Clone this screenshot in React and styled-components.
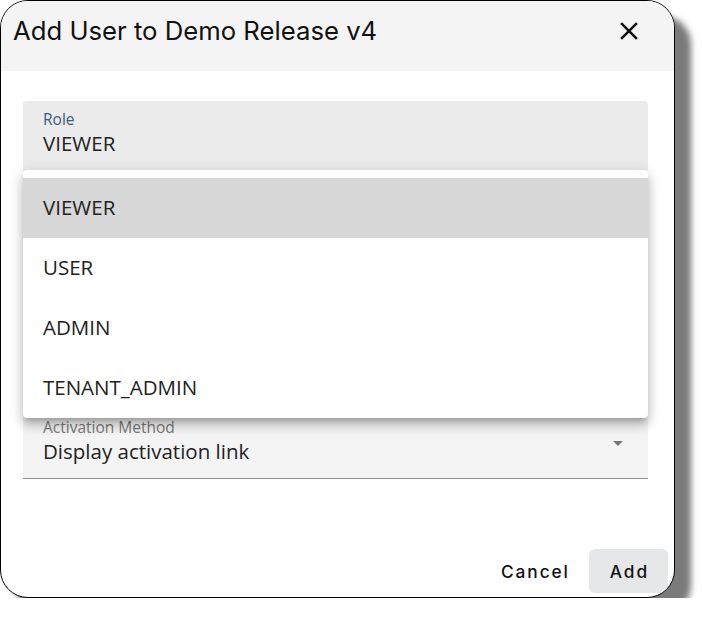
import React from 'react';
import styled, { createGlobalStyle } from 'styled-components';

const GlobalStyle = createGlobalStyle`
    body {
        margin:0;
        background:#fff;
        font-family:"Open Sans", "Liberation Sans", sans-serif;
    }
`

const Dialog = styled.div`
    width:675px;
    height:598px;
    box-sizing:border-box;
    border:1px solid #000;
    border-radius:28px;
    background:#fff;
    box-shadow:16px 16px 6px #7a7a7a;
    overflow:hidden;
    display:flex;
    flex-direction:column;
`
const Header = styled.div`
    height:70px;
    flex-shrink:0;
    background:#f4f4f4;
    display:flex;
    justify-content:space-between;
    align-items:flex-start;
    padding:14px 30px 0 12px;
    box-sizing:border-box;
`
const Title = styled.h2`
    margin:0;
    font-family:Inter, "Liberation Sans", sans-serif;
    font-size:25.7px;
    font-weight:400;
    line-height:31px;
    color:#111;
`
const CloseButton = styled.button`
    border:none;
    background:none;
    padding:0;
    width:30px;
    height:30px;
    margin-top:1px;
    color:#111;
    cursor:pointer;
`
const Body = styled.div`
    padding:30px 26px 0 22px;
    display:flex;
    flex-direction:column;
`
const Field = styled.div`
    position:relative;
    height:70px;
    box-sizing:border-box;
    padding:7px 20px 0 20px;
    border-radius:4px 4px 0 0;
    background:${({focused}) => focused ? '#ebebeb' : '#f4f4f4'};
    border-bottom:${({focused}) => focused ? 'none' : '1px solid #8c8c8c'};
    margin-top:${({offset}) => offset || 0}px;
`
const Label = styled.div`
    font-size:15.5px;
    line-height:22px;
    color:${({focused}) => focused ? '#3d5a7d' : '#7a7a7a'};
`
const Value = styled.div`
    font-size:20.5px;
    line-height:26px;
    color:#222;
`
const Arrow = styled.span`
    position:absolute;
    right:25px;
    top:32px;
    width:0;
    height:0;
    border-left:5px solid transparent;
    border-right:5px solid transparent;
    border-top:5px solid #757575;
`
const Menu = styled.ul`
    position:absolute;
    top:69px;
    left:0;
    right:0;
    margin:0;
    padding:8px 0 0;
    list-style:none;
    background:#fff;
    border-radius:4px;
    z-index:2;
    box-shadow:0px 5px 5px -3px rgba(0,0,0,0.2), 0px 8px 10px 1px rgba(0,0,0,0.14), 0px 3px 14px 2px rgba(0,0,0,0.12);
`
const MenuItem = styled.li`
    height:60px;
    display:flex;
    align-items:center;
    padding:0 0 2px 20px;
    box-sizing:border-box;
    font-size:20.5px;
    color:#222;
    background:${({selected}) => selected ? '#d7d7d7' : 'transparent'};
`
const Footer = styled.div`
    margin-top:auto;
    display:flex;
    justify-content:flex-end;
    align-items:center;
    padding:0 6px 4px 0;
`
const Button = styled.button`
    height:44px;
    padding:0 19px 0 21px;
    border:none;
    border-radius:6px;
    font-family:Inter, "Liberation Sans", sans-serif;
    font-size:17.3px;
    font-weight:500;
    letter-spacing:1.9px;
    color:#111;
    background:${({filled}) => filled ? '#e6e7e9' : 'transparent'};
    cursor:pointer;
`

const roles = ['VIEWER', 'USER', 'ADMIN', 'TENANT_ADMIN'];

function CloseIcon() {
    return (
        <svg width="30" height="30" viewBox="0 0 24 24" fill="currentColor">
            <path d="M19 6.41 17.59 5 12 10.59 6.41 5 5 6.41 10.59 12 5 17.59 6.41 19 12 13.41 17.59 19 19 17.59 13.41 12z" />
        </svg>
    );
}

export default function App() {
    return (
        <>
            <GlobalStyle />
            <Dialog>
                <Header>
                    <Title>Add User to Demo Release v4</Title>
                    <CloseButton aria-label="close"><CloseIcon /></CloseButton>
                </Header>
                <Body>
                    <Field focused>
                        <Label focused>Role</Label>
                        <Value>VIEWER</Value>
                        <Menu>
                            {roles.map(r => (
                                <MenuItem key={r} selected={r === 'VIEWER'}>{r}</MenuItem>
                            ))}
                        </Menu>
                    </Field>
                    <Field offset={238}>
                        <Label>Activation Method</Label>
                        <Value>Display activation link</Value>
                        <Arrow />
                    </Field>
                </Body>
                <Footer>
                    <Button>Cancel</Button>
                    <Button filled>Add</Button>
                </Footer>
            </Dialog>
        </>
    );
}
